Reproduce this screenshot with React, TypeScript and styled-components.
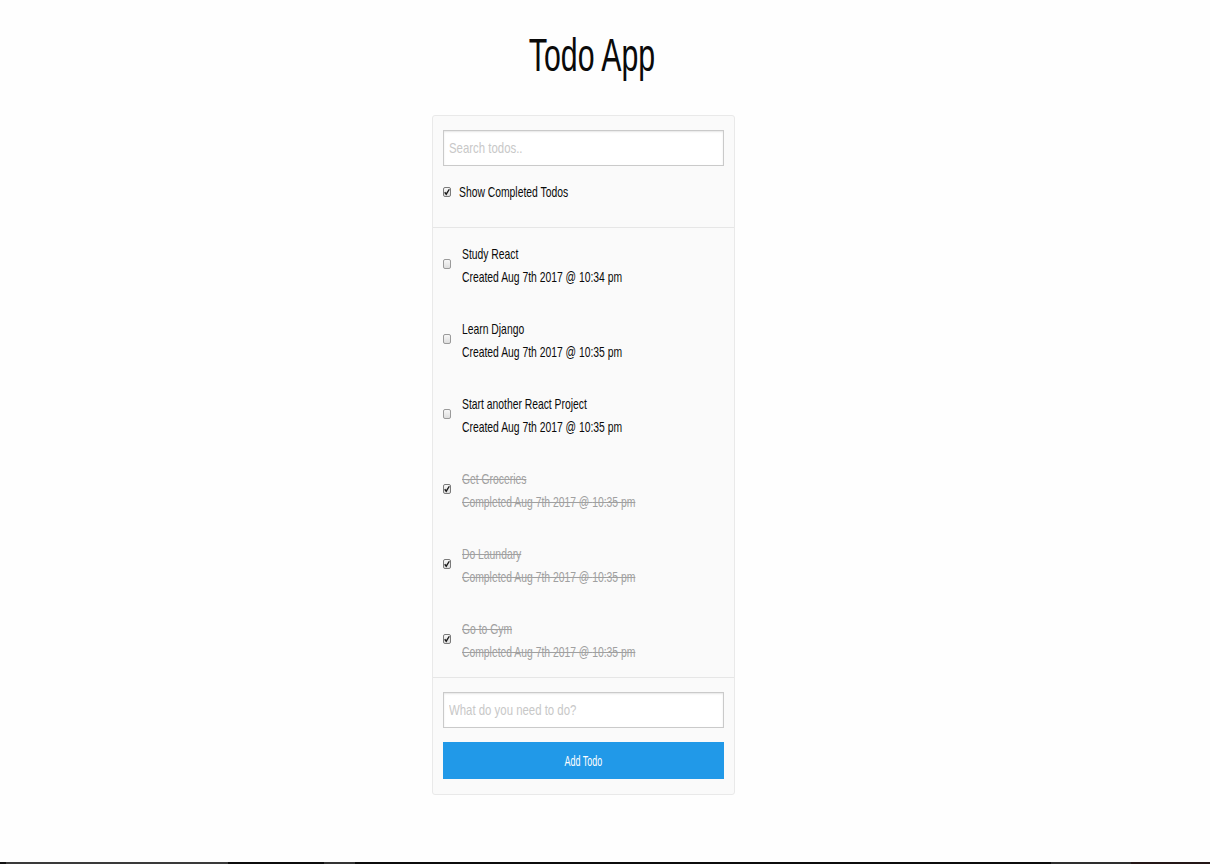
import React from "react";
import styled, { createGlobalStyle } from "styled-components";

const GlobalStyle = createGlobalStyle`
  html, body { margin: 0; padding: 0; background: #fefefe; }
  body { font-family: "Liberation Sans", Arial, sans-serif; color: #0a0a0a; }
  * { box-sizing: border-box; }
`;

const Root = styled.div`
  min-height: 100vh;
  display: flex;
  flex-direction: column;
`;

const Main = styled.main`
  flex: 1;
  display: flex;
  flex-direction: column;
`;

const TitleBar = styled.h1`
  margin: 27px 0 0;
  padding-right: 26px;
  font-size: 47px;
  line-height: 56px;
  font-weight: 400;
  text-align: center;
`;

const Squeeze = styled.span<{ $sx: number; $origin?: string }>`
  display: inline-block;
  white-space: nowrap;
  transform: scaleX(${(p) => p.$sx});
  transform-origin: ${(p) => p.$origin ?? "left center"};
`;

const Card = styled.section`
  margin: 32px 0 0 432px;
  width: 303px;
  border: 1px solid #e9e9e9;
  border-radius: 3px;
  background: #fafafa;
`;

const Section = styled.div<{ $pt: number; $pb: number; $divider?: boolean }>`
  padding: ${(p) => p.$pt}px 10px ${(p) => p.$pb}px;
  border-top: ${(p) => (p.$divider ? "1px solid #e6e6e6" : "none")};
  display: flex;
  flex-direction: column;
`;

const InputWrap = styled.div`
  position: relative;
  height: 36px;
`;

const TextInput = styled.input`
  width: 100%;
  height: 36px;
  padding: 0 6px;
  border: 1px solid #cacaca;
  background: #fff;
  box-shadow: inset 0 1px 2px rgba(10, 10, 10, 0.1);
  font-family: "Liberation Sans", Arial, sans-serif;
  font-size: 15px;
  color: #0a0a0a;
  outline: none;
`;

const Placeholder = styled.span`
  position: absolute;
  left: 6px;
  top: -1px;
  height: 36px;
  display: flex;
  align-items: center;
  pointer-events: none;
  color: #c8c8c8;
  font-size: 15px;
  white-space: nowrap;
  transform: scaleX(0.76);
  transform-origin: left center;
`;

const CheckRow = styled.label<{ $gap: number; $mt?: number }>`
  display: flex;
  align-items: center;
  gap: ${(p) => p.$gap}px;
  margin-top: ${(p) => p.$mt ?? 0}px;
  font-size: 15px;
  line-height: 23px;
`;

const Box = styled.span<{ $checked: boolean; $shift?: number }>`
  flex: none;
  position: relative;
  top: ${(p) => p.$shift ?? 0}px;
  width: 8px;
  height: 10px;
  border: 1px solid ${(p) => (p.$checked ? "#7a7a7a" : "#9a9a9a")};
  border-radius: 2px;
  background: linear-gradient(#f7f7f7, #dedede);
  display: flex;
  align-items: center;
  justify-content: center;
`;

const List = styled.ul`
  list-style: none;
  margin: 0;
  padding: 0;
  display: flex;
  flex-direction: column;
  gap: 29px;
`;

const Item = styled.li`
  display: flex;
  align-items: center;
  gap: 11px;
  font-size: 15px;
  line-height: 23px;
`;

const ItemText = styled.div<{ $done: boolean }>`
  display: flex;
  flex-direction: column;
  color: ${(p) => (p.$done ? "#a0a0a0" : "#0a0a0a")};
  text-decoration: ${(p) => (p.$done ? "line-through" : "none")};
`;

const AddButton = styled.button`
  margin-top: 14px;
  height: 37px;
  width: 100%;
  border: none;
  background: #2199e8;
  color: #fefefe;
  font-family: "Liberation Sans", Arial, sans-serif;
  font-size: 14px;
  cursor: pointer;
`;

const Strip = styled.div`
  height: 2px;
  background: linear-gradient(
    to right,
    #111 0 6px,
    #3a3a3a 6px 228px,
    #0c0c0c 228px 324px,
    #333 324px 355px,
    #0c0c0c 355px 1051px,
    #2e2e2e 1051px 1131px,
    #241616 1131px
  );
`;

const Check = ({ checked, shift }: { checked: boolean; shift?: number }) => (
  <Box $checked={checked} $shift={shift} role="checkbox" aria-checked={checked}>
    {checked && (
      <svg width="7" height="8" viewBox="0 0 7 8">
        <path d="M0.8 4.3 L2.6 6.6 L6.2 0.8" fill="none" stroke="#1a1a1a" strokeWidth="1.6" />
      </svg>
    )}
  </Box>
);

const Field = ({ hint }: { hint: string }) => (
  <InputWrap>
    <TextInput aria-label={hint} />
    <Placeholder aria-hidden>{hint}</Placeholder>
  </InputWrap>
);

type Todo = { text: string; done: boolean; time: string };

const todos: Todo[] = [
  { text: "Study React", done: false, time: "10:34 pm" },
  { text: "Learn Django", done: false, time: "10:35 pm" },
  { text: "Start another React Project", done: false, time: "10:35 pm" },
  { text: "Get Groceries", done: true, time: "10:35 pm" },
  { text: "Do Laundary", done: true, time: "10:35 pm" },
  { text: "Go to Gym", done: true, time: "10:35 pm" },
];

export default function App() {
  return (
    <Root>
      <GlobalStyle />
      <Main>
        <TitleBar>
          <Squeeze $sx={0.645} $origin="center">Todo App</Squeeze>
        </TitleBar>
        <Card>
          <Section $pt={14} $pb={24}>
            <Field hint="Search todos.." />
            <CheckRow $gap={8} $mt={14}>
              <Check checked />
              <Squeeze $sx={0.69}>Show Completed Todos</Squeeze>
            </CheckRow>
          </Section>
          <Section $pt={14} $pb={14} $divider>
            <List>
              {todos.map((t) => (
                <Item key={t.text}>
                  <Check checked={t.done} shift={-1} />
                  <ItemText $done={t.done}>
                    <Squeeze $sx={0.69}>{t.text}</Squeeze>
                    <Squeeze $sx={0.69}>
                      {t.done ? "Completed" : "Created"} Aug 7th 2017 @ {t.time}
                    </Squeeze>
                  </ItemText>
                </Item>
              ))}
            </List>
          </Section>
          <Section $pt={14} $pb={15} $divider>
            <Field hint="What do you need to do?" />
            <AddButton>
              <Squeeze $sx={0.64} $origin="center">Add Todo</Squeeze>
            </AddButton>
          </Section>
        </Card>
      </Main>
      <Strip />
    </Root>
  );
}
